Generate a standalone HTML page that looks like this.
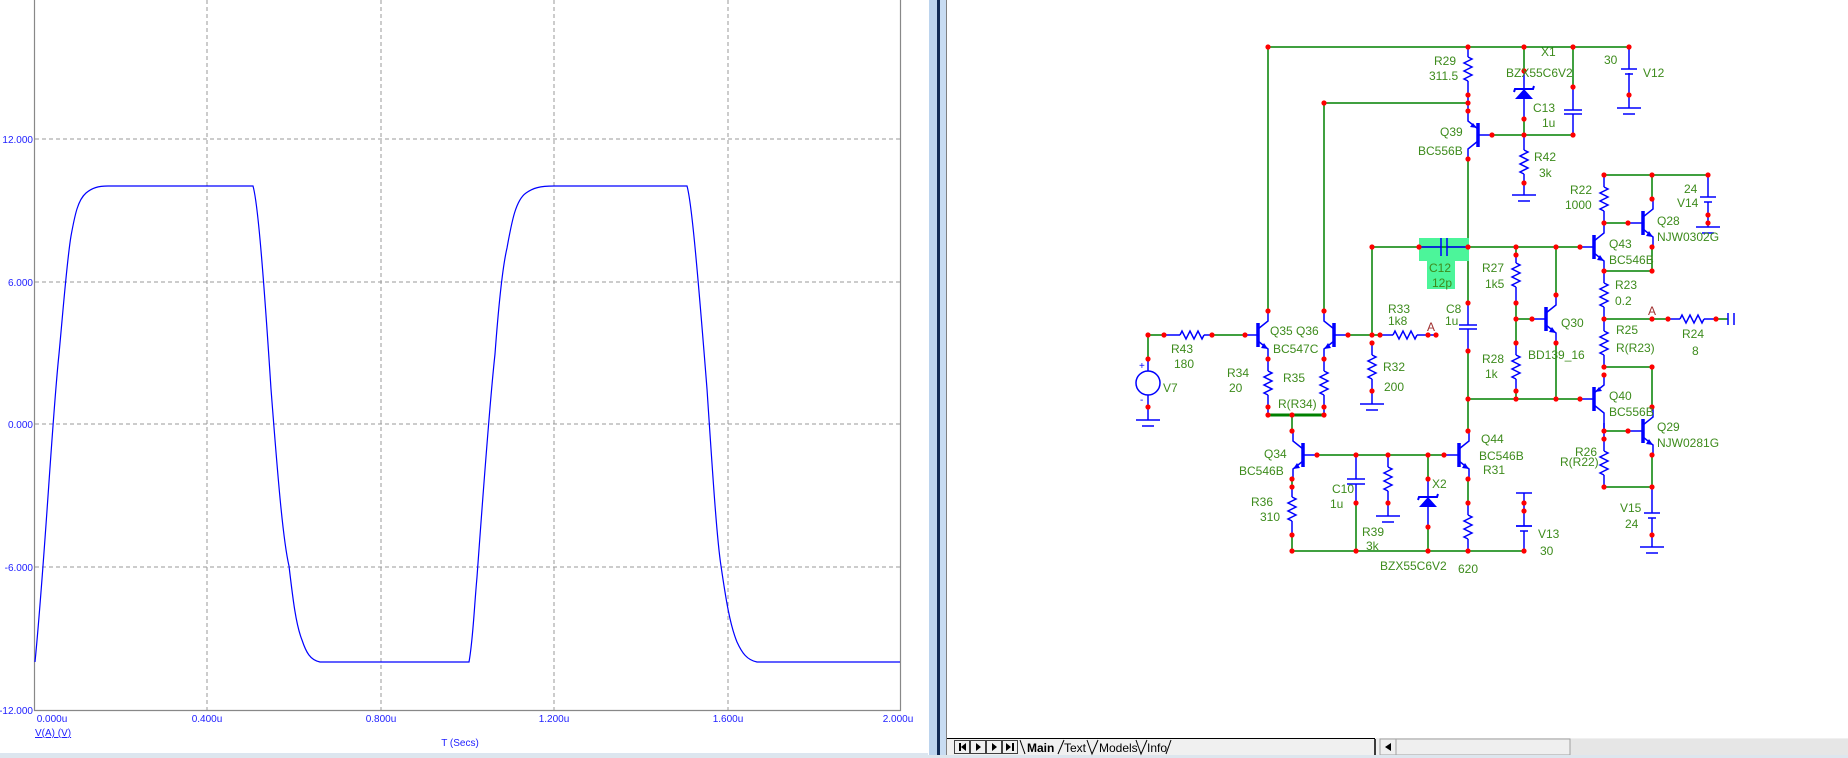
<!DOCTYPE html>
<html><head><meta charset="utf-8"><style>
html,body{margin:0;padding:0;background:#fff;overflow:hidden}
svg{display:block}
.g{stroke:#008000;stroke-width:1.5;fill:none}
.b{stroke:#0000ff;stroke-width:1.5;fill:none}
.t{font-family:"Liberation Sans",sans-serif;font-size:12px;fill:#3d8b1c}
.ax{font-family:"Liberation Sans",sans-serif;font-size:10px;fill:#2020ff}
</style></head><body>
<svg width="1848" height="758" viewBox="0 0 1848 758" xmlns="http://www.w3.org/2000/svg">
<defs>
<g id="npn"><line x1="0" y1="-12" x2="0" y2="12" stroke="#00f" stroke-width="3.5"/><path d="M0,-6 L10,-14 V-24 M0,6 L10,14 V24 M-14,0 H0" stroke="#00f" stroke-width="1.5" fill="none"/><path d="M10,14 L3,13 L6,8 Z" fill="#00f"/></g>
<g id="pnp"><line x1="0" y1="-12" x2="0" y2="12" stroke="#00f" stroke-width="3.5"/><path d="M0,-6 L10,-14 V-24 M0,6 L10,14 V24 M-14,0 H0" stroke="#00f" stroke-width="1.5" fill="none"/><path d="M1,7 L8,8 L5,12 Z" fill="#00f"/></g>
<path id="zz" d="M0,0 l4,2 l-8,4 l8,4 l-8,4 l8,4 l-8,4 l4,2" stroke="#00f" stroke-width="1.5" fill="none"/>
<path id="zh" d="M0,0 l2,-4 l4,8 l4,-8 l4,8 l4,-8 l4,8 l2,-4" stroke="#00f" stroke-width="1.5" fill="none"/>
<g id="gnd"><path d="M-12,0 H12 M-6,6 H6" stroke="#00f" stroke-width="1.5"/></g>
</defs>

<!-- LEFT PLOT -->
<g stroke="#999" stroke-width="1" stroke-dasharray="4,3">
<line x1="207" y1="0" x2="207" y2="710"/><line x1="381" y1="0" x2="381" y2="710"/><line x1="554" y1="0" x2="554" y2="710"/><line x1="728" y1="0" x2="728" y2="710"/>
<line x1="35" y1="139" x2="900" y2="139"/><line x1="35" y1="282" x2="900" y2="282"/><line x1="35" y1="424" x2="900" y2="424"/><line x1="35" y1="567" x2="900" y2="567"/>
</g>
<path d="M34.5,0 V710.5 H900.5 V0" stroke="#888" stroke-width="1.2" fill="none"/>
<path d="M35,662 C45,560 52,420 59,354 C64,300 67,260 71,236 C75,214 78,200 86,193 C92,188 98,186 108,186 L253,186 C257,200 262,250 271,389 C278,480 283,540 289,566 C293,600 296,625 302,640 C306,652 310,660 320,662 L469,662 C473,640 474,610 477,577 C484,480 490,400 495,354 C499,300 503,265 507,248 C512,220 516,200 526,193 C533,188 540,186 554,186 L687,186 C691,200 696,250 707,389 C713,480 717,540 721,566 C726,600 730,625 737,642 C742,653 747,660 757,662 L900,662" stroke="#0000ff" stroke-width="1.2" fill="none"/>
<g class="ax" text-anchor="end"><text x="33" y="143">12.000</text><text x="33" y="286">6.000</text><text x="33" y="428">0.000</text><text x="33" y="571">-6.000</text><text x="33" y="714">-12.000</text></g>
<g class="ax" text-anchor="middle"><text x="52" y="722">0.000u</text><text x="207" y="722">0.400u</text><text x="381" y="722">0.800u</text><text x="554" y="722">1.200u</text><text x="728" y="722">1.600u</text><text x="898" y="722">2.000u</text><text x="460" y="746">T (Secs)</text></g>
<text class="ax" x="35" y="736" text-decoration="underline">V(A) (V)</text>
<rect x="0" y="753" width="928" height="5" fill="#dce6f0"/>

<!-- SPLITTER -->
<rect x="929" y="0" width="8" height="758" fill="#bcd4ee"/>
<rect x="937" y="0" width="3" height="758" fill="#102a55"/>
<rect x="940" y="0" width="6" height="758" fill="#c8dcf2"/>
<rect x="946" y="0" width="1" height="758" fill="#808080"/>

<!-- BOTTOM TAB BAR -->
<rect x="947" y="738" width="901" height="20" fill="#f0f0f0"/>
<rect x="1396" y="739" width="452" height="16" fill="#e6e6e6"/>
<rect x="1396" y="739" width="174" height="16" fill="#efefef" stroke="#a0a0a0"/>
<rect x="1380" y="739" width="16" height="16" fill="#efefef" stroke="#a0a0a0"/>
<path d="M1391,743 L1385,747 L1391,751Z" fill="#000"/>
<line x1="1375" y1="739" x2="1375" y2="755" stroke="#000" stroke-width="1.5"/>
<line x1="947" y1="738.5" x2="1375" y2="738.5" stroke="#000"/>
<rect x="0" y="755" width="1848" height="3" fill="#dde6ee"/>
<g fill="#f0f0f0" stroke="#404040"><rect x="954.5" y="740.5" width="15" height="13"/><rect x="970.5" y="740.5" width="15" height="13"/><rect x="986.5" y="740.5" width="15" height="13"/><rect x="1002.5" y="740.5" width="15" height="13"/></g>
<g fill="#000"><rect x="959" y="743" width="2" height="8"/><path d="M966,743 L961,747 L966,751Z"/><path d="M976,743 L981,747 L976,751Z M992,743 L997,747 L992,751Z"/><path d="M1006,743 L1011,747 L1006,751Z"/><rect x="1012" y="743" width="2" height="8"/></g>
<path d="M1020,740 L1025,754 M1058,754 L1064,740 M1087,740 L1092,754 L1098,740 M1136,740 L1141,754 L1147,740 M1166,754 L1171,740" stroke="#000" fill="none"/>
<g font-family="Liberation Sans,sans-serif" font-size="12px" fill="#000"><text x="1027" y="752" font-weight="bold">Main</text><text x="1064" y="752">Text</text><text x="1099" y="752">Models</text><text x="1147" y="752">Info</text></g>

<!-- SCHEMATIC: green wires -->
<path class="g" d="M1268,47 H1629 M1268,47 V311 M1324,103 H1468 M1324,103 V311 M1524,47 V71 M1524,119 V135 M1573,47 V87 M1492,135 H1573 M1468,159 V303 M1468,351 V431 M1372,247 H1419 M1469,247 H1580 M1372,247 V335 M1348,335 H1380 M1148,335 H1164 M1148,335 V359 M1212,335 H1245 M1268,415 H1324 M1292,415 V431 M1317,455 H1444 M1292,551 H1524 M1292,535 V551 M1356,503 V551 M1428,527 V551 M1428,455 V479 M1516,247 V255 M1516,303 V343 M1516,319 H1532 M1516,391 V399 M1556,247 V295 M1556,343 V399 M1468,399 H1580 M1604,175 H1708 M1652,175 V199 M1604,223 H1628 M1604,271 H1652 M1652,247 V271 M1604,319 H1668 M1716,319 H1728 M1604,367 H1652 M1652,367 V407 M1604,431 H1628 M1604,487 H1652 M1652,455 V487 M1468,479 V503 M1292,479 V487"/>
<path d="M1268,415 H1324" stroke="#008000" stroke-width="3"/>

<!-- blue component wiring -->
<path class="b" d="M1468,47 V57 M1468,81 V111 M1524,71 V119 M1573,87 V110 M1573,114 V135 M1524,135 V150 M1524,174 V195 M1629,47 V69 M1629,73 V108 M1468,303 V325 M1468,329 V351 M1419,247 H1441 M1447,247 H1469 M1372,343 V355 M1372,379 V404 M1268,359 V371 M1268,395 V415 M1324,359 V371 M1324,395 V415 M1148,359 V371 M1148,395 V420 M1164,335 H1180 M1204,335 H1212 M1380,335 H1393 M1417,335 H1436 M1292,487 V497 M1292,521 V535 M1356,455 V479 M1356,484 V503 M1388,455 V467 M1388,491 V516 M1428,479 V527 M1468,503 V515 M1468,539 V551 M1524,503 V526 M1524,531 V551 M1516,255 V263 M1516,287 V303 M1516,343 V355 M1516,379 V391 M1604,175 V187 M1604,211 V223 M1604,271 V283 M1604,307 V319 M1604,319 V331 M1604,355 V367 M1604,423 V439 M1604,439 V451 M1604,475 V487 M1708,175 V197 M1708,202 V227 M1652,487 V513 M1652,518 V547 M1668,319 H1680 M1704,319 H1716"/>
<g><use href="#zz" x="1468" y="57"/><use href="#zz" x="1524" y="150"/><use href="#zz" x="1372" y="355"/><use href="#zz" x="1268" y="371"/><use href="#zz" x="1324" y="371"/><use href="#zz" x="1292" y="497"/><use href="#zz" x="1388" y="467"/><use href="#zz" x="1468" y="515"/><use href="#zz" x="1516" y="263"/><use href="#zz" x="1516" y="355"/><use href="#zz" x="1604" y="187"/><use href="#zz" x="1604" y="283"/><use href="#zz" x="1604" y="331"/><use href="#zz" x="1604" y="451"/><use href="#zh" x="1180" y="335"/><use href="#zh" x="1393" y="335"/><use href="#zh" x="1680" y="319"/></g>
<!-- capacitors -->
<path d="M1564,110 H1582 M1564,114 H1582 M1459,325 H1477 M1459,329 H1477 M1347,479 H1365 M1347,484 H1365" stroke="#00f" stroke-width="1.5"/>
<rect x="1419" y="238" width="50" height="23" fill="#4cf59a"/><rect x="1427" y="261" width="28" height="28" fill="#4cf59a"/>
<path class="g" d="M1419,247 H1469"/><path d="M1419,247 H1441 M1447,247 H1469 M1441,238 V256 M1447,238 V256" stroke="#00f" stroke-width="1.5"/>
<!-- batteries -->
<path d="M1621,69 H1637 M1625,74 H1633 M1700,197 H1716 M1704,202 H1712 M1644,513 H1660 M1648,518 H1656 M1516,526 H1532 M1520,531 H1528" stroke="#00f" stroke-width="1.5"/>
<path d="M1516,493 H1532 M1524,493 V503 M1516,526 H1532" stroke="#00f" stroke-width="1.5"/>
<!-- grounds -->
<use href="#gnd" x="1629" y="108"/><use href="#gnd" x="1524" y="195"/><use href="#gnd" x="1372" y="404"/><use href="#gnd" x="1148" y="420"/><use href="#gnd" x="1388" y="516"/><use href="#gnd" x="1652" y="547"/><use href="#gnd" x="1708" y="227"/>
<path d="M1728,313 V325 M1734,313 V325" stroke="#00f" stroke-width="1.5"/>
<!-- zeners -->
<path d="M1515,99 L1533,99 L1524,89 Z M1419,507 L1437,507 L1428,497 Z" fill="#00f"/>
<path d="M1514,92 L1515,89 H1533 L1534,86 M1418,500 L1419,497 H1437 L1438,494" stroke="#00f" stroke-width="2" fill="none"/>
<!-- V7 source -->
<circle cx="1148" cy="383" r="12" stroke="#00f" stroke-width="1.5" fill="none"/>
<text x="1139" y="369" font-family="Liberation Sans" font-size="10" fill="#00f">+</text><text x="1140" y="403" font-family="Liberation Sans" font-size="10" fill="#00f">-</text>
<!-- transistors -->
<use href="#npn" transform="translate(1258,335)"/>
<use href="#npn" transform="translate(1334,335) scale(-1,1)"/>
<use href="#pnp" transform="translate(1478,135) scale(-1,-1)"/>
<use href="#npn" transform="translate(1594,247)"/>
<use href="#npn" transform="translate(1643,223)"/>
<use href="#npn" transform="translate(1546,319)"/>
<use href="#pnp" transform="translate(1594,399) scale(1,-1)"/>
<path class="b" d="M1604,423 V431"/>
<use href="#npn" transform="translate(1643,431)"/>
<use href="#npn" transform="translate(1459,455)"/>
<use href="#npn" transform="translate(1303,455) scale(-1,1)"/>

<!-- dots -->
<g fill="#f00">
<circle cx="1268" cy="47" r="2.6"/><circle cx="1468" cy="47" r="2.6"/><circle cx="1524" cy="47" r="2.6"/><circle cx="1573" cy="47" r="2.6"/><circle cx="1629" cy="47" r="2.6"/>
<circle cx="1468" cy="95" r="2.6"/><circle cx="1468" cy="103" r="2.6"/><circle cx="1468" cy="111" r="2.6"/><circle cx="1324" cy="103" r="2.6"/><circle cx="1524" cy="71" r="2.6"/><circle cx="1524" cy="119" r="2.6"/><circle cx="1524" cy="135" r="2.6"/><circle cx="1573" cy="87" r="2.6"/><circle cx="1573" cy="135" r="2.6"/><circle cx="1492" cy="135" r="2.6"/><circle cx="1468" cy="159" r="2.6"/><circle cx="1524" cy="183" r="2.6"/><circle cx="1629" cy="95" r="2.6"/>
<circle cx="1372" cy="247" r="2.6"/><circle cx="1419" cy="247" r="2.6"/><circle cx="1468" cy="247" r="2.6"/><circle cx="1516" cy="247" r="2.6"/><circle cx="1556" cy="247" r="2.6"/><circle cx="1580" cy="247" r="2.6"/><circle cx="1516" cy="255" r="2.6"/>
<circle cx="1604" cy="175" r="2.6"/><circle cx="1652" cy="175" r="2.6"/><circle cx="1708" cy="175" r="2.6"/><circle cx="1652" cy="199" r="2.6"/><circle cx="1708" cy="215" r="2.6"/><circle cx="1708" cy="223" r="2.6"/><circle cx="1604" cy="223" r="2.6"/><circle cx="1628" cy="223" r="2.6"/><circle cx="1652" cy="247" r="2.6"/><circle cx="1604" cy="271" r="2.6"/><circle cx="1652" cy="271" r="2.6"/>
<circle cx="1604" cy="319" r="2.6"/><circle cx="1652" cy="319" r="2.6"/><circle cx="1668" cy="319" r="2.6"/><circle cx="1716" cy="319" r="2.6"/><circle cx="1604" cy="367" r="2.6"/><circle cx="1652" cy="367" r="2.6"/><circle cx="1652" cy="407" r="2.6"/><circle cx="1604" cy="375" r="2.6"/><circle cx="1580" cy="399" r="2.6"/><circle cx="1604" cy="431" r="2.6"/><circle cx="1628" cy="431" r="2.6"/><circle cx="1604" cy="439" r="2.6"/><circle cx="1652" cy="455" r="2.6"/><circle cx="1604" cy="487" r="2.6"/><circle cx="1652" cy="487" r="2.6"/><circle cx="1652" cy="535" r="2.6"/>
<circle cx="1516" cy="303" r="2.6"/><circle cx="1516" cy="319" r="2.6"/><circle cx="1532" cy="319" r="2.6"/><circle cx="1556" cy="295" r="2.6"/><circle cx="1556" cy="343" r="2.6"/><circle cx="1516" cy="343" r="2.6"/><circle cx="1516" cy="391" r="2.6"/><circle cx="1516" cy="399" r="2.6"/><circle cx="1556" cy="399" r="2.6"/><circle cx="1468" cy="399" r="2.6"/>
<circle cx="1468" cy="303" r="2.6"/><circle cx="1468" cy="351" r="2.6"/><circle cx="1468" cy="431" r="2.6"/><circle cx="1444" cy="455" r="2.6"/><circle cx="1468" cy="479" r="2.6"/><circle cx="1468" cy="503" r="2.6"/><circle cx="1468" cy="551" r="2.6"/>
<circle cx="1148" cy="335" r="2.6"/><circle cx="1164" cy="335" r="2.6"/><circle cx="1212" cy="335" r="2.6"/><circle cx="1245" cy="335" r="2.6"/><circle cx="1148" cy="359" r="2.6"/><circle cx="1148" cy="407" r="2.6"/>
<circle cx="1268" cy="311" r="2.6"/><circle cx="1268" cy="359" r="2.6"/><circle cx="1268" cy="407" r="2.6"/><circle cx="1268" cy="415" r="2.6"/><circle cx="1324" cy="311" r="2.6"/><circle cx="1324" cy="359" r="2.6"/><circle cx="1324" cy="407" r="2.6"/><circle cx="1324" cy="415" r="2.6"/><circle cx="1292" cy="415" r="2.6"/>
<circle cx="1348" cy="335" r="2.6"/><circle cx="1372" cy="335" r="2.6"/><circle cx="1380" cy="335" r="2.6"/><circle cx="1428" cy="335" r="2.6"/><circle cx="1436" cy="335" r="2.6"/><circle cx="1372" cy="343" r="2.6"/><circle cx="1372" cy="391" r="2.6"/>
<circle cx="1292" cy="431" r="2.6"/><circle cx="1317" cy="455" r="2.6"/><circle cx="1356" cy="455" r="2.6"/><circle cx="1388" cy="455" r="2.6"/><circle cx="1428" cy="455" r="2.6"/><circle cx="1292" cy="479" r="2.6"/><circle cx="1292" cy="487" r="2.6"/><circle cx="1292" cy="535" r="2.6"/><circle cx="1292" cy="551" r="2.6"/>
<circle cx="1356" cy="503" r="2.6"/><circle cx="1356" cy="551" r="2.6"/><circle cx="1388" cy="503" r="2.6"/><circle cx="1428" cy="479" r="2.6"/><circle cx="1428" cy="527" r="2.6"/><circle cx="1428" cy="551" r="2.6"/><circle cx="1524" cy="503" r="2.6"/><circle cx="1524" cy="511" r="2.6"/><circle cx="1524" cy="551" r="2.6"/>
</g>

<!-- labels -->
<g class="t">
<text x="1434" y="65">R29</text><text x="1429" y="80">311.5</text><text x="1541" y="56">X1</text><text x="1506" y="77">BZX55C6V2</text><text x="1533" y="112">C13</text><text x="1542" y="127">1u</text><text x="1604" y="64">30</text><text x="1643" y="77">V12</text>
<text x="1440" y="136">Q39</text><text x="1418" y="155">BC556B</text><text x="1534" y="161">R42</text><text x="1539" y="177">3k</text><text x="1570" y="194">R22</text><text x="1565" y="209">1000</text>
<text x="1609" y="248">Q43</text><text x="1609" y="264">BC546B</text><text x="1429" y="272">C12</text><text x="1432" y="287">12p</text><text x="1482" y="272">R27</text><text x="1485" y="288">1k5</text>
<text x="1684" y="193">24</text><text x="1677" y="207">V14</text><text x="1657" y="225">Q28</text><text x="1657" y="241">NJW0302G</text><text x="1615" y="289">R23</text><text x="1615" y="305">0.2</text>
<text x="1616" y="334">R25</text><text x="1616" y="352">R(R23)</text><text x="1682" y="338">R24</text><text x="1692" y="355">8</text><text x="1528" y="359">BD139_16</text><text x="1561" y="327">Q30</text>
<text x="1609" y="400">Q40</text><text x="1609" y="416">BC556B</text><text x="1657" y="431">Q29</text><text x="1657" y="447">NJW0281G</text><text x="1575" y="456">R26</text><text x="1560" y="466">R(R22)</text><text x="1620" y="512">V15</text><text x="1625" y="528">24</text><text x="1538" y="538">V13</text><text x="1540" y="555">30</text>
<text x="1270" y="335">Q35 Q36</text><text x="1273" y="353">BC547C</text><text x="1171" y="353">R43</text><text x="1174" y="368">180</text><text x="1163" y="392">V7</text><text x="1227" y="377">R34</text><text x="1229" y="392">20</text><text x="1283" y="382">R35</text><text x="1278" y="408">R(R34)</text>
<text x="1388" y="313">R33</text><text x="1388" y="325">1k8</text><text x="1446" y="313">C8</text><text x="1445" y="325">1u</text><text x="1383" y="371">R32</text><text x="1384" y="391">200</text><text x="1482" y="363">R28</text><text x="1485" y="378">1k</text>
<text x="1481" y="443">Q44</text><text x="1479" y="460">BC546B</text><text x="1483" y="474">R31</text><text x="1264" y="458">Q34</text><text x="1239" y="475">BC546B</text><text x="1332" y="493">C10</text><text x="1330" y="508">1u</text><text x="1432" y="488">X2</text>
<text x="1251" y="506">R36</text><text x="1260" y="521">310</text><text x="1362" y="536">R39</text><text x="1366" y="550">3k</text><text x="1380" y="570">BZX55C6V2</text><text x="1458" y="573">620</text>
</g>
<g font-family="Liberation Sans,sans-serif" font-size="12px" fill="#a03030"><text x="1427" y="331">A</text><text x="1648" y="315">A</text></g>
</svg>
</body></html>
